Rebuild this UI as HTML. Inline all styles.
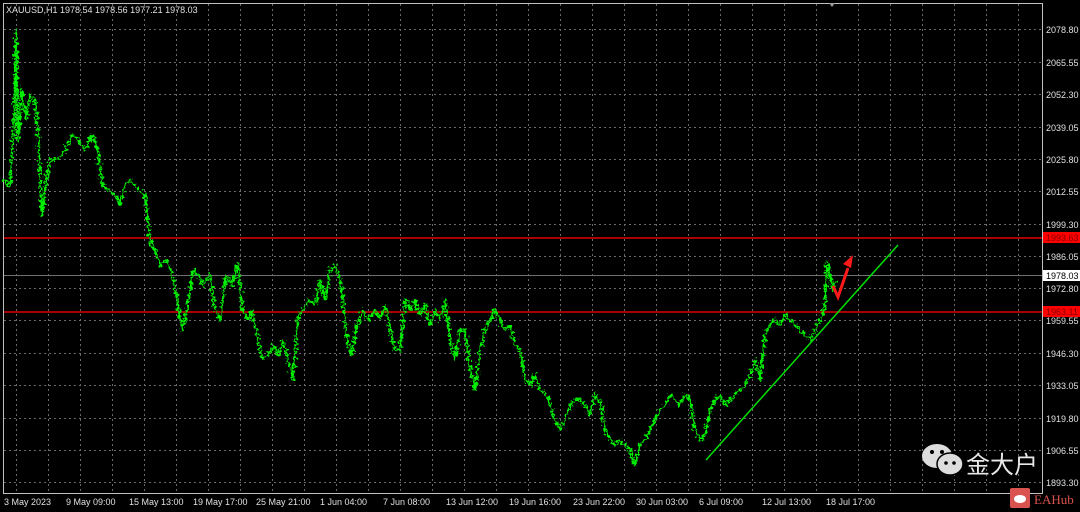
<!DOCTYPE html>
<html><head><meta charset="utf-8"><style>
body{margin:0;background:#000;width:1080px;height:512px;overflow:hidden;font-family:"Liberation Sans",sans-serif}
svg{display:block}
</style></head><body>
<svg width="1080" height="512" xmlns="http://www.w3.org/2000/svg" font-family="Liberation Sans, sans-serif">
<defs>
<filter id="j" x="-5%" y="-5%" width="110%" height="110%">
<feTurbulence type="fractalNoise" baseFrequency="0.35" numOctaves="2" seed="3" result="n"/>
<feDisplacementMap in="SourceGraphic" in2="n" scale="9" xChannelSelector="R" yChannelSelector="G"/>
</filter>
</defs>
<rect width="1080" height="512" fill="#000"/>
<rect x="3.5" y="3.5" width="1039" height="490" fill="none" stroke="#c0c0c0" stroke-width="1"/>
<g stroke="#6a6a6a" stroke-dasharray="2,3" stroke-width="1">
<path d="M16.5 4V493M48.5 4V493M80.5 4V493M112.5 4V493M144.5 4V493M176.5 4V493M208.5 4V493M240.5 4V493M272.5 4V493M304.5 4V493M336.5 4V493M368.5 4V493M400.5 4V493M432.5 4V493M464.5 4V493M496.5 4V493M528.5 4V493M560.5 4V493M592.5 4V493M624.5 4V493M656.5 4V493M688.5 4V493M720.5 4V493M752.5 4V493M784.5 4V493M816.5 4V493M858.5 4V493M890.5 4V493M922.5 4V493M954.5 4V493M986.5 4V493M1018.5 4V493"/>
<path d="M4 29.5H1042M4 62.5H1042M4 94.5H1042M4 127.5H1042M4 159.5H1042M4 191.5H1042M4 224.5H1042M4 256.5H1042M4 288.5H1042M4 320.5H1042M4 353.5H1042M4 385.5H1042M4 418.5H1042M4 450.5H1042M4 482.5H1042"/>
</g>
<line x1="4" y1="275.5" x2="1042" y2="275.5" stroke="#707070"/>
<line x1="4" y1="238" x2="1042" y2="238" stroke="#e00000" stroke-width="1.5"/>
<line x1="4" y1="312" x2="1042" y2="312" stroke="#e00000" stroke-width="1.5"/>
<polyline filter="url(#j)" fill="none" stroke="#00f000" stroke-width="2.2" stroke-linejoin="round" points="3,180 10,185 14,120 16,30 18,140 22,90 26,120 30,95 35,100 38,130 42,215 46,180 50,160 58,160 65,150 72,135 78,140 85,150 92,135 98,150 102,185 108,190 115,195 120,205 125,185 130,180 138,190 145,195 150,240 155,250 160,265 167,260 172,275 177,300 182,330 187,310 193,270 198,275 203,285 210,275 215,310 220,320 226,275 232,285 238,262 242,310 248,320 252,310 258,340 262,360 268,355 273,345 278,355 283,340 288,360 293,380 298,315 303,310 308,300 315,305 320,280 325,300 330,270 335,265 340,280 343,300 347,340 352,355 356,330 362,310 368,320 375,310 380,318 386,305 390,330 395,350 400,350 405,300 410,310 415,300 420,315 425,305 430,325 435,310 440,320 445,300 450,340 455,360 460,330 465,330 470,370 475,390 480,350 485,330 490,320 495,310 500,320 505,330 510,325 515,345 520,350 525,380 530,385 535,375 540,390 547,395 555,420 560,430 565,420 570,405 575,400 580,400 585,405 590,415 595,395 600,400 605,430 610,440 615,445 620,440 625,445 630,450 635,465 640,445 645,440 650,430 655,420 660,410 665,405 670,395 675,400 680,405 685,395 690,400 695,430 700,440 705,435 710,410 715,400 720,395 725,405 730,400 735,395 740,390 745,385 750,375 755,360 760,380 765,335 770,325 775,320 780,325 785,315 790,320 795,325 800,330 805,335 810,340 815,330 820,320 825,305 827,262 830,275 833,290 836,280"/>
<line x1="706" y1="460" x2="898" y2="245" stroke="#00e000" stroke-width="1.5"/>
<path d="M833 286 L838 297 L848 268" fill="none" stroke="#ff1a1a" stroke-width="3"/>
<path d="M853 255 L843 264 L851 268 Z" fill="#ff1a1a"/>
<path d="M829 3 L835 3 L832 7Z" fill="#999"/>
<text x="6" y="13" fill="#e0e0e0" font-size="9">XAUUSD,H1  1978.54 1978.56 1977.21 1978.03</text>
<g fill="#e0e0e0" font-size="9">
<text x="1046" y="33">2078.80</text><text x="1046" y="66">2065.55</text><text x="1046" y="98">2052.30</text><text x="1046" y="131">2039.05</text><text x="1046" y="163">2025.80</text><text x="1046" y="195">2012.55</text><text x="1046" y="228">1999.30</text><text x="1046" y="260">1986.05</text><text x="1046" y="292">1972.80</text><text x="1046" y="324">1959.55</text><text x="1046" y="357">1946.30</text><text x="1046" y="389">1933.05</text><text x="1046" y="422">1919.80</text><text x="1046" y="454">1906.55</text><text x="1046" y="486">1893.30</text>
</g>
<rect x="1043" y="232" width="37" height="11" fill="#ff0000"/><text x="1046" y="241" fill="#800000" font-size="9">1993.63</text>
<rect x="1043" y="270" width="37" height="11" fill="#fff"/><text x="1046" y="279" fill="#000" font-size="9">1978.03</text>
<rect x="1043" y="306" width="37" height="11" fill="#ff0000"/><text x="1046" y="315" fill="#800000" font-size="9">1963.11</text>
<g fill="#e0e0e0" font-size="9">
<text x="4" y="505">3 May 2023</text><text x="66" y="505">9 May 09:00</text><text x="129" y="505">15 May 13:00</text><text x="193" y="505">19 May 17:00</text><text x="256" y="505">25 May 21:00</text><text x="320" y="505">1 Jun 04:00</text><text x="383" y="505">7 Jun 08:00</text><text x="446" y="505">13 Jun 12:00</text><text x="509" y="505">19 Jun 16:00</text><text x="573" y="505">23 Jun 22:00</text><text x="636" y="505">30 Jun 03:00</text><text x="699" y="505">6 Jul 09:00</text><text x="762" y="505">12 Jul 13:00</text><text x="826" y="505">18 Jul 17:00</text>
</g>
<g fill="#ddd">
<ellipse cx="937" cy="456" rx="15" ry="12"/><ellipse cx="950" cy="464" rx="13" ry="11" stroke="#000" stroke-width="1.5"/>
<circle cx="932" cy="452" r="2" fill="#000"/><circle cx="942" cy="452" r="2" fill="#000"/>
<circle cx="946" cy="463" r="1.8" fill="#000"/><circle cx="954" cy="463" r="1.8" fill="#000"/>
</g>
<text x="966" y="473" fill="#e8e8e8" font-size="24" font-family="Liberation Sans, Noto Sans CJK SC, sans-serif">金大户</text>
<rect x="1010" y="488" width="20" height="20" rx="2" fill="#d9534f"/>
<ellipse cx="1020" cy="499" rx="6" ry="4" fill="#fff"/>
<text x="1034" y="504" fill="#d9534f" font-size="13" font-family="Liberation Serif, serif">EAHub</text>
</svg>
</body></html>
